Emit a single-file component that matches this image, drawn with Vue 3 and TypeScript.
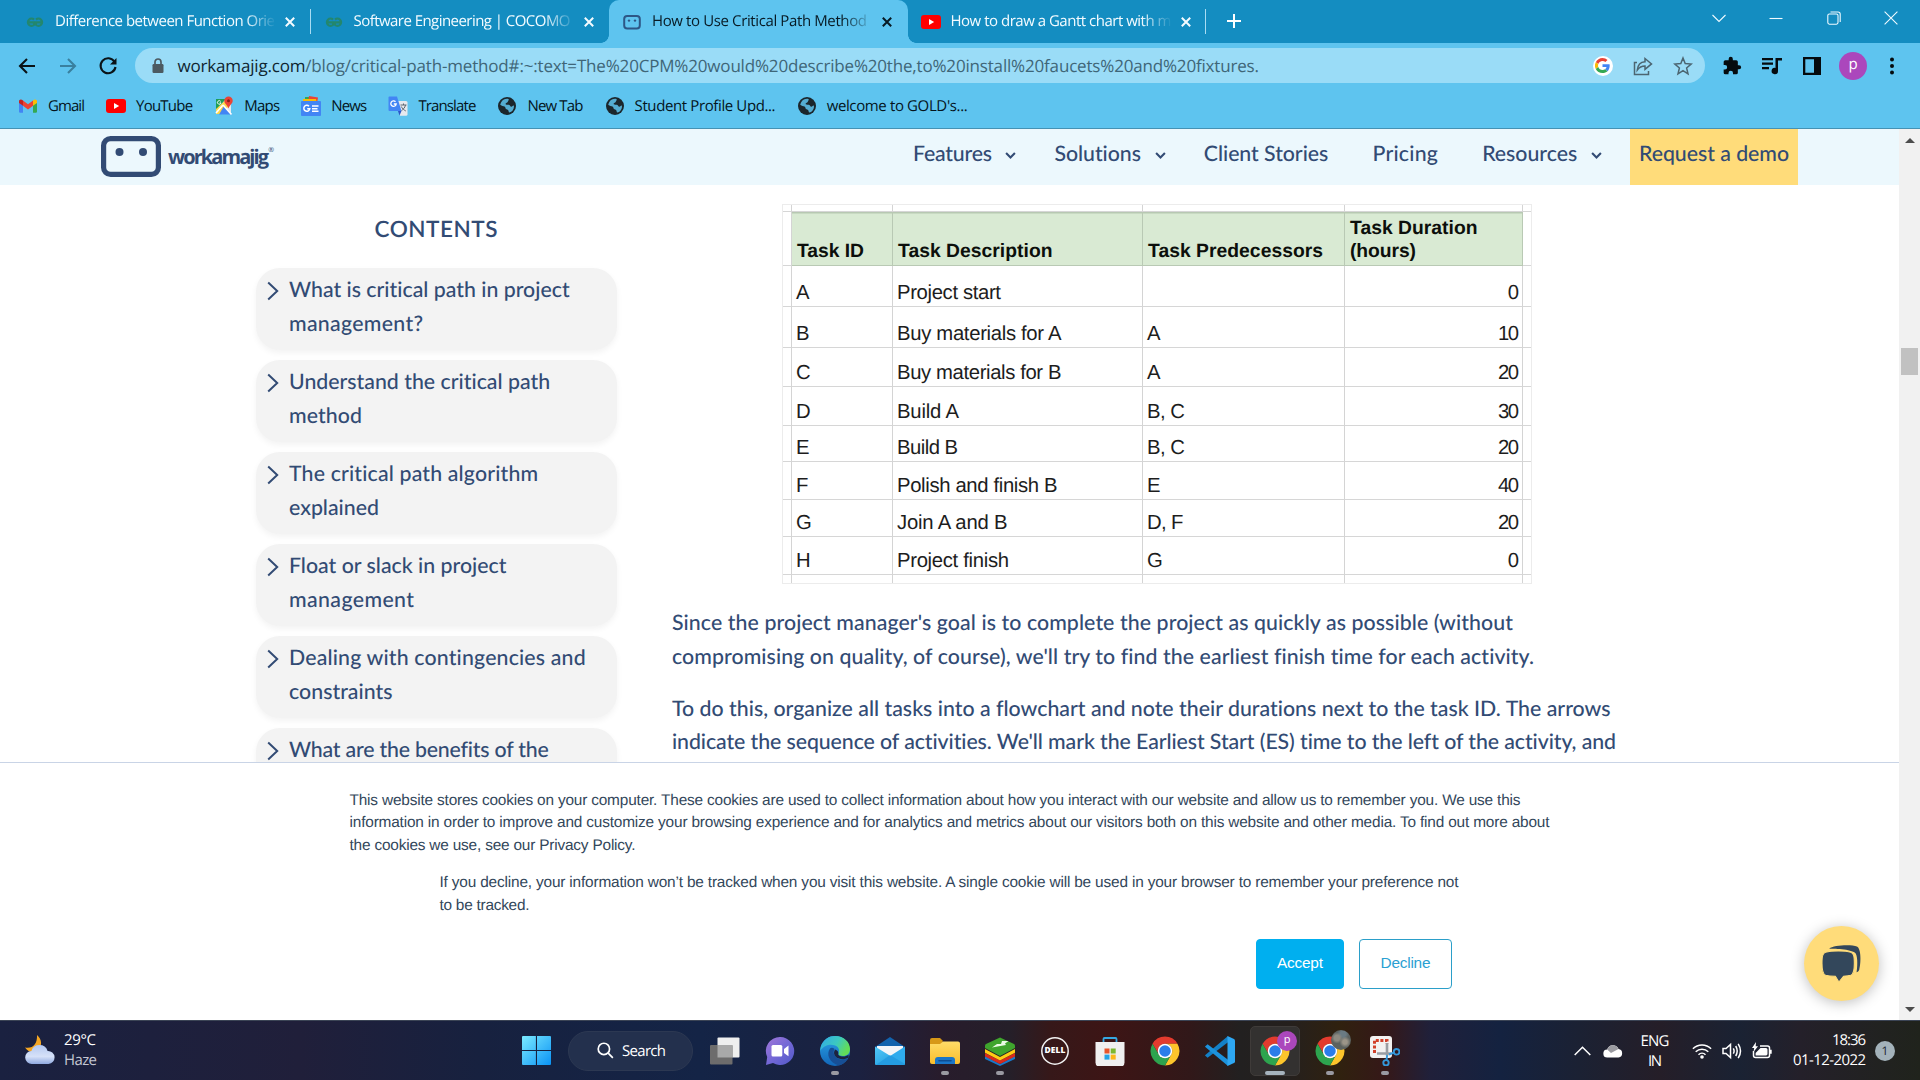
<script setup lang="ts">
import type { Directive } from 'vue'

// Spreads or tightens the letters so a line takes the given width in pixels.
const vFit: Directive<HTMLElement, number> = {
  mounted(el, binding) {
    el.style.letterSpacing = '0px'
    const natural = el.getBoundingClientRect().width
    const gaps = Math.max(1, (el.textContent ?? '').length - 1)
    const spacing = (binding.value - natural) / gaps
    el.style.letterSpacing = `${spacing}px`
    el.style.marginRight = `${-spacing}px`
  },
}

type Line = [text: string, width: number]

const tabs = [
  { title: 'Difference between Function Orie', width: 220, icon: 'gfg', active: false, sep: true },
  { title: 'Software Engineering | COCOMO', width: 217, icon: 'gfg', active: false, sep: false },
  { title: 'How to Use Critical Path Method', width: 215, icon: 'robot', active: true, sep: false },
  { title: 'How to draw a Gantt chart with m', width: 221, icon: 'youtube', active: false, sep: true },
]

const bookmarks = [
  { name: 'Gmail', width: 37, icon: 'gmail' },
  { name: 'YouTube', width: 57, icon: 'youtube' },
  { name: 'Maps', width: 36, icon: 'maps' },
  { name: 'News', width: 36, icon: 'news' },
  { name: 'Translate', width: 58, icon: 'translate' },
  { name: 'New Tab', width: 56, icon: 'globe' },
  { name: 'Student Profile Upd...', width: 141, icon: 'globe' },
  { name: "welcome to GOLD's...", width: 141, icon: 'globe' },
]

const nav = [
  { name: 'Features', width: 79, menu: true },
  { name: 'Solutions', width: 87, menu: true },
  { name: 'Client Stories', width: 124.5, menu: false },
  { name: 'Pricing', width: 65.5, menu: false },
  { name: 'Resources', width: 95, menu: true },
]

const contents: Line[][] = [
  [['What is critical path in project', 281], ['management?', 134]],
  [['Understand the critical path', 261.5], ['method', 73]],
  [['The critical path algorithm', 249.5], ['explained', 90]],
  [['Float or slack in project', 217.5], ['management', 125]],
  [['Dealing with contingencies and', 297], ['constraints', 103.5]],
  [['What are the benefits of the', 259.5]],
]

const headers: Line[][] = [
  [['Task ID', 67]],
  [['Task Description', 154.5]],
  [['Task Predecessors', 175]],
  [['Task Duration', 127.5], ['(hours)', 66]],
]

const tasks: { h: number; cells: Line[] }[] = [
  { h: 41, cells: [['A', 13], ['Project start', 104], ['', 0], ['0', 11]] },
  { h: 41, cells: [['B', 13], ['Buy materials for A', 164.5], ['A', 13], ['10', 21]] },
  { h: 39, cells: [['C', 14], ['Buy materials for B', 164.5], ['A', 13], ['20', 21]] },
  { h: 39, cells: [['D', 14], ['Build A', 62], ['B, C', 38], ['30', 21]] },
  { h: 36, cells: [['E', 13], ['Build B', 61], ['B, C', 38], ['20', 21]] },
  { h: 38, cells: [['F', 12], ['Polish and finish B', 160.5], ['E', 13], ['40', 21]] },
  { h: 37, cells: [['G', 15], ['Join A and B', 110.5], ['D, F', 36.5], ['20', 21]] },
  { h: 38, cells: [['H', 14], ['Project finish', 112], ['G', 15], ['0', 11]] },
]

const paragraphs: Line[][] = [
  [
    ["Since the project manager's goal is to complete the project as quickly as possible (without", 841],
    ["compromising on quality, of course), we'll try to find the earliest finish time for each activity.", 862],
  ],
  [
    ['To do this, organize all tasks into a flowchart and note their durations next to the task ID. The arrows', 939],
    ["indicate the sequence of activities. We'll mark the Earliest Start (ES) time to the left of the activity, and", 945],
  ],
]

const notice: Line[] = [
  ['This website stores cookies on your computer. These cookies are used to collect information about how you interact with our website and allow us to remember you. We use this', 1171],
  ['information in order to improve and customize your browsing experience and for analytics and metrics about our visitors both on this website and other media. To find out more about', 1200],
  ['the cookies we use, see our Privacy Policy.', 286],
]
const decline: Line[] = [
  ['If you decline, your information won’t be tracked when you visit this website. A single cookie will be used in your browser to remember your preference not', 1019],
  ['to be tracked.', 90],
]

const apps = [
  { icon: 'taskview', run: '' },
  { icon: 'chat', run: '' },
  { icon: 'edge', run: 'on' },
  { icon: 'mail', run: '' },
  { icon: 'folder', run: 'on' },
  { icon: 'stacks', run: 'on' },
  { icon: 'dell', run: '' },
  { icon: 'store', run: '' },
  { icon: 'chrome', run: '' },
  { icon: 'vscode', run: '' },
  { icon: 'chrome', run: 'front', badge: 'p' },
  { icon: 'chrome', run: 'on', badge: 'photo' },
  { icon: 'snip', run: 'on' },
]
</script>

<template>
  <div class="screen">
    <svg class="sprite" aria-hidden="true">
      <defs>
        <linearGradient id="gStart" x1="0" y1="0" x2="1" y2="1"><stop offset="0" stop-color="#7beaff" /><stop offset="1" stop-color="#0a93f5" /></linearGradient>
        <linearGradient id="gChat" x1="0" y1="0" x2="1" y2="1"><stop offset="0" stop-color="#a277d8" /><stop offset=".5" stop-color="#7468d6" /><stop offset="1" stop-color="#5059c9" /></linearGradient>
        <linearGradient id="gEdgeTop" x1="0" y1="0" x2="1" y2=".4"><stop offset="0" stop-color="#31a8e8" /><stop offset=".6" stop-color="#3cc9c0" /><stop offset="1" stop-color="#62dd58" /></linearGradient>
        <linearGradient id="gEdgeLow" x1="0" y1="0" x2="0" y2="1"><stop offset="0" stop-color="#2aa3e6" /><stop offset="1" stop-color="#1266b8" /></linearGradient>
        <linearGradient id="gFolder" x1="0" y1="0" x2="0" y2="1"><stop offset="0" stop-color="#ffdc68" /><stop offset="1" stop-color="#f9bd2c" /></linearGradient>
        <linearGradient id="gCloud" x1="0" y1="0" x2="0" y2="1"><stop offset="0" stop-color="#b4c8f0" /><stop offset=".6" stop-color="#d6e1f8" /><stop offset="1" stop-color="#8fa9e0" /></linearGradient>
        <linearGradient id="gMail" x1="0" y1="0" x2="1" y2="1"><stop offset="0" stop-color="#53c9f7" /><stop offset="1" stop-color="#1593dc" /></linearGradient>
      </defs>
      <symbol id="gfg" viewBox="0 0 20 20"><g fill="none" stroke="#23876e" stroke-width="2.2"><path d="M9 7.6A3.6 3.6 0 1 0 9 12.8V10.4H2.6" /><path d="M11 7.6a3.6 3.6 0 1 1 0 5.2v-2.4h6.4" /></g></symbol>
      <symbol id="robot" viewBox="0 0 20 20"><rect x="2.2" y="4" width="15.6" height="12.4" rx="3" fill="none" stroke="#2d5786" stroke-width="2" /><circle cx="7" cy="8.6" r="1.2" fill="#2d5786" /><circle cx="13" cy="8.6" r="1.2" fill="#2d5786" /></symbol>
      <symbol id="youtube" viewBox="0 0 20 20"><rect y="3" width="20" height="14" rx="3" fill="#f00" /><path d="M8 7v6l5.2-3z" fill="#fff" /></symbol>
      <symbol id="gmail" viewBox="0 0 20 20"><path d="M1 5.400V15.500q0 1.200 1.200 1.200H5V8z" fill="#4285f4" /><path d="M15 8v8.700h2.800q1.200 0 1.200-1.200V5.400z" fill="#34a853" /><path d="M5 4.500v5.300l5 3.700 5-3.700V4.500l-5 3.800z" fill="#ea4335" /><path d="M1 5.400C1 3.300 3.300 2.800 5 4.500v5.300L1 7z" fill="#c5221f" /><path d="M19 5.400c0-2.100-2.300-2.600-4-.9v5.300L19 7z" fill="#fbbc04" /></symbol>
      <symbol id="maps" viewBox="0 0 20 20"><path d="M2 3h10l5 6v8.500H2z" fill="#e8eaed" /><path d="M2 3h10L2 14z" fill="#1e9e58" /><path d="M2 13 13 3l3 6-9 9H2z" fill="#fdd74a" /><path d="m10 10 8 8.500H5z" fill="#4285f4" /><path d="m9 9 8.500 9.500M2 17l7-8" stroke="#fff" stroke-width="1.700" /><path d="M14.500.500a4.200 4.200 0 0 0-4.200 4.200c0 3 3.100 4 4.200 7.800 1.100-3.800 4.200-4.800 4.200-7.800A4.200 4.200 0 0 0 14.500.500z" fill="#ea4335" /><circle cx="14.500" cy="4.800" r="1.500" fill="#8c1c14" /><path d="M6.700 5.400a1.800 1.800 0 1 0 .3 1.500H5.600" fill="none" stroke="#fff" stroke-width=".9" /></symbol>
      <symbol id="news" viewBox="0 0 20 20"><path d="M4 1h9v6H4z" fill="#34a853" /><path d="m8 0 9 1.500-1 6H7z" fill="#ea4335" /><path d="M2 3h13l1 5H2z" fill="#fbbc04" /><rect y="5" width="20" height="15" rx="1" fill="#4285f4" /><path d="M8 10.200a3 3 0 1 0 .8 2.500H6.200" fill="none" stroke="#fff" stroke-width="1.500" /><path d="M11 10h6.500M11 12.700h5.500M11 15.300h6.500" stroke="#fff" stroke-width="1.400" /></symbol>
      <symbol id="translate" viewBox="0 0 20 20"><path d="M9 5h9q1.500 0 1.500 1.500v12q0 1.300-1.500 1.300h-6z" fill="#e6e9ee" /><path d="M1.500.500H9l4.500 14.500h-12Q.500 15 .500 14V1.500q0-1 1-1z" fill="#4285f4" /><path d="m10 15 3.500 0-2 4.500z" fill="#2a56c6" /><path d="M7.500 5.800a2.700 2.700 0 1 0 .7 2.200H5.800" fill="none" stroke="#fff" stroke-width="1.300" /><path d="M12.500 9h6M15.500 7.500V9M17.500 9c-.6 3-2.500 4.500-4 5.500m-.2-4c.9 2 2.700 3.500 4.500 4.500" fill="none" stroke="#5c6670" stroke-width="1" /></symbol>
      <symbol id="globe" viewBox="0 0 20 20"><circle cx="10" cy="10" r="9" fill="#1b262c" /><path d="M4.200 6.200C6 3.200 9 2.400 11.500 3c.8 1.200-.6 1.600-.7 2.800-.1 1-1.800.8-2.200 1.900-.3 1 1.700.9 3 1 1.500.2 1.500 1.800 2.800 2 .9.100.8-1.400 2.500-1.300.5 3.500-1.600 6.300-4.500 7.200-1-.3-.4-1.800-1.400-2.700-.8-.8-2.500-.6-2.600-2 0-.9-.7-1.500-1.800-1.700C5.100 10 3.400 9.400 3.200 8.500z" fill="#5ec4ef" opacity=".85" /></symbol>
      <symbol id="chrome" viewBox="0 0 48 48"><path d="M4.080 12.500A23 23 0 0 1 43.920 12.500H24A11.500 11.500 0 0 0 14.040 29.750z" fill="#e33b2e" /><path d="M43.920 12.500A23 23 0 0 1 24 47L33.960 29.750A11.500 11.500 0 0 0 24 12.500z" fill="#fdc52b" /><path d="M24 47A23 23 0 0 1 4.080 12.500L14.040 29.750A11.500 11.500 0 0 0 33.960 29.750z" fill="#2da44e" /><circle cx="24" cy="24" r="11.600" fill="#fff" /><circle cx="24" cy="24" r="9.200" fill="#2b7de9" /></symbol>
      <symbol id="taskview" viewBox="0 0 30 30"><rect x="7.500" y="1.500" width="22" height="20" rx="1" fill="#efefef" /><rect x="0" y="9" width="22.500" height="19.500" rx="1" fill="#6d6c6c" /><path d="M7.500 9h15v12.500h-15z" fill="#a9a9a9" /></symbol>
      <symbol id="chat" viewBox="0 0 30 30"><path d="M15 1a14 14 0 1 1-7 26l-7 2L2.200 21A14 14 0 0 1 15 1z" fill="url(#gChat)" /><rect x="6.500" y="9" width="10.800" height="11.500" rx="1.500" fill="#fff" /><path d="m19 13 4.500-3.500v10.800L19 17z" fill="#fff" /></symbol>
      <symbol id="edge" viewBox="0 0 30 30"><circle cx="15" cy="15" r="15" fill="url(#gEdgeLow)" /><path d="M1 10C4 3 9 0 15 0c9 0 15 6 15 13 0 5-3.500 7-7 7-3 0-5-1-4.500-2.500.8-2 1-5-1.500-7C13 7.500 5 7.500 0 15z" fill="url(#gEdgeTop)" /><path d="M10 12.500C6 18 9 27 19 29.400c4-1.200 7-3.600 9-7-4 1.600-9 1.600-12-1.200-2.500-2.200-3-5.500-1.500-8.200-1.500-1.500-3.500-1.500-4.500-.5z" fill="#174f96" /><path d="M15 13.500c2.500.5 3.800 3 3.300 4.300-.6 1.600 1.700 2.700 4.700 2.700 2.300 0 4-.6 5.500-2l.3 3c-4.300 2.600-9.800 2.200-12.800-.4-2.400-2.200-2.500-5.200-1-7.600z" fill="#1c2340" /></symbol>
      <symbol id="mail" viewBox="0 0 30 30"><path d="M0 11 15 1l15 10v5H0z" fill="#1263ad" /><path d="M2 10h26v12H2z" fill="#f3f5f8" /><path d="M0 10.500 30 29H1q-1 0-1-1z" fill="url(#gMail)" /><path d="M30 10.500v17.500q0 1-1 1H1z" fill="#2fabed" /><path d="m15 19 15 9v.500l-1 .5H1z" fill="#1b8fd8" opacity=".55" /></symbol>
      <symbol id="folder" viewBox="0 0 30 30"><path d="M0 4q0-2 2-2h8l3 3-3 5H0z" fill="#d79817" /><path d="M0 8h10l3-2.500h15q2 0 2 2V26q0 2-2 2H2q-2 0-2-2z" fill="url(#gFolder)" /><path d="M5 28v-4q0-3 3-3h14q3 0 3 3v4z" fill="#1a76c8" /><path d="M9 24.800h12" stroke="#0d4e93" stroke-width="1.600" stroke-linecap="round" /></symbol>
      <symbol id="stacks" viewBox="0 0 30 30"><path d="m0 20 15 8 15-8v3l-15 7-15-7z" fill="#1878c9" /><path d="m0 17 15 7.500L30 17v3.500L15 28 0 20.500z" fill="#d92a1c" /><path d="m0 13 15 8 15-8v3.700L15 24.500 0 16.700z" fill="#ffcc14" /><path d="M15 1.500 29 8q1 .600 1 2v2L15 20 0 12v-2q0-1.400 1-2z" fill="#3fa52d" /><path d="m17 5 6.500 0-3.500 2.500 1 1.500-14 2.500 5-3.500h4z" fill="#e9fbe3" /></symbol>
      <symbol id="dell" viewBox="0 0 30 30"><circle cx="15" cy="15" r="13.200" fill="none" stroke="#f1f1f1" stroke-width="1.500" /></symbol>
      <symbol id="store" viewBox="0 0 30 30"><path d="M8.500 7V3q0-1 1-1h11q1 0 1 1v4" fill="none" stroke="#35a8e2" stroke-width="1.800" /><path d="M.500 6h29v20.500q0 4-4 4h-21q-4 0-4-4z" fill="#f0f0f0" /><path d="M9.500 12.500h5v5h-5z" fill="#e9552b" /><path d="M15.700 12.500h5v5h-5z" fill="#7cb82f" /><path d="M9.500 18.600h5v5h-5z" fill="#25a3e6" /><path d="M15.700 18.600h5v5h-5z" fill="#fbb81b" /></symbol>
      <symbol id="vscode" viewBox="0 0 30 30"><path d="m0 19.500 2.600 2.200L23 6.200V0L.3 19z" fill="#1380c7" /><path d="M0 10.500 2.600 8.300 23 23.800V30L.3 11z" fill="#1c92dc" /><path d="m22.500 0 6.500 3q1 .500 1 1.500v21q0 1-1 1.500l-6.500 3z" fill="#2ea7f2" /></symbol>
      <symbol id="snip" viewBox="0 0 30 30"><rect y="0" width="22" height="22" rx="3" fill="#f3f1f0" /><path d="M4.500 17V4.500H17v3" fill="none" stroke="#d2402a" stroke-width="3" stroke-dasharray="3 1.600" /><path d="M17 7v12.500M7 17.500h14" stroke="#9a9da2" stroke-width="2.600" /><g fill="none" stroke="#3498db" stroke-width="1.900"><circle cx="26.600" cy="15.800" r="2.800" /><circle cx="16" cy="26.800" r="2.700" /><path d="m19 18.500 5-2m-6.800 2.500-.7 5" /></g></symbol>
    </svg>

    <header class="browser">
      <div class="tabs">
        <div v-for="t in tabs" :key="t.title" class="tab" :class="{ active: t.active, sep: t.sep }">
          <svg class="i20"><use :href="'#' + t.icon" /></svg>
          <span class="title"><span v-fit="t.width" class="ln">{{ t.title }}</span></span>
          <svg class="close" viewBox="0 0 12 12"><path d="m1.800 1.800 8.400 8.400m0-8.400-8.400 8.400" /></svg>
        </div>
        <svg class="plus" viewBox="0 0 16 16"><path d="M8 1v14M1 8h14" /></svg>
        <div class="winctl">
          <svg viewBox="0 0 14 14"><path d="m.5 4 6.500 6.500L13.500 4" /></svg>
          <svg viewBox="0 0 14 14"><path d="M.5 7.500h13" /></svg>
          <svg viewBox="0 0 14 14"><rect x=".8" y="3" width="10.200" height="10.200" rx="1.600" /><path d="M3.500 1H11q2.200 0 2.200 2.200V11" /></svg>
          <svg viewBox="0 0 14 14"><path d="m.6.6 12.800 12.800m0-12.800L.6 13.400" /></svg>
        </div>
      </div>

      <div class="toolbar">
        <svg class="nv" viewBox="0 0 20 20"><path d="M18 10H3m7-7-7 7 7 7" /></svg>
        <svg class="nv dim" viewBox="0 0 20 20"><path d="M2 10h15m-7-7 7 7-7 7" /></svg>
        <svg class="nv" viewBox="0 0 20 20"><path d="M16.500 5.800A7.500 7.500 0 1 0 17.500 11" /><path d="M18.500 2v6.500H12z" fill="#0a1317" stroke="none" /></svg>
        <div class="omni">
          <svg class="lock" viewBox="0 0 12 16"><rect x=".5" y="6" width="11" height="9" rx="1.200" fill="#4c5a61" /><path d="M3 6V4a3 3 0 0 1 6 0v2" fill="none" stroke="#4c5a61" stroke-width="1.700" /></svg>
          <span v-fit="1081.5" class="ln url"><b>workamajig.com</b>/blog/critical-path-method#:~:text=The%20CPM%20would%20describe%20the,to%20install%20faucets%20and%20fixtures.</span>
          <span class="g"><svg viewBox="0 0 48 48"><path fill="#ea4335" d="M24 9.500c3.500 0 6.700 1.200 9.200 3.600l6.900-6.900C35.900 2.400 30.500 0 24 0 14.600 0 6.500 5.400 2.600 13.200l8 6.200C12.400 13.700 17.700 9.500 24 9.500z" /><path fill="#4285f4" d="M47 24.600c0-1.600-.2-3.100-.4-4.600H24v9h12.900c-.6 3-2.200 5.500-4.700 7.200l7.700 6C44.400 38 47 31.800 47 24.600z" /><path fill="#fbbc05" d="M10.500 28.600a14.500 14.500 0 0 1 0-9.200l-8-6.200a24 24 0 0 0 0 21.600z" /><path fill="#34a853" d="M24 48c6.500 0 11.900-2.100 15.900-5.800l-7.700-6c-2.200 1.500-4.900 2.300-8.200 2.300-6.300 0-11.600-4.200-13.500-9.900l-8 6.200C6.500 42.600 14.600 48 24 48z" /></svg></span>
          <svg class="oi" viewBox="0 0 20 20"><path d="M4 6.500H1.500v12h14V15" /><path d="M12 2.500v3.200C7 6 4.700 9.500 4.300 14c2-2.800 4.200-4 7.700-4v3.300l6.500-5.400z" /></svg>
          <svg class="oi" viewBox="0 0 20 20"><path d="m10 2 2.200 5.600 6 .5-4.600 3.900 1.400 5.900-5-3.200-5 3.200 1.400-5.900L1.800 8.100l6-.5z" /></svg>
        </div>
        <div class="ext">
          <svg class="i20" viewBox="0 0 24 24"><path d="M20.500 11H19V7a2 2 0 0 0-2-2h-4V3.500a2.500 2.500 0 0 0-5 0V5H4a2 2 0 0 0-2 2v3.800h1.500a2.700 2.700 0 0 1 0 5.400H2V20a2 2 0 0 0 2 2h3.800v-1.500a2.700 2.700 0 0 1 5.400 0V22H17a2 2 0 0 0 2-2v-4h1.500a2.500 2.500 0 0 0 0-5z" /></svg>
          <svg class="i20" viewBox="0 0 20 20"><path d="M0 2h11v2.200H0zM0 6.500h11v2.200H0zM0 11h7v2.200H0zM13.500 2H20v2.400h-4V15a3.200 3.200 0 1 1-2.500-3.100z" /></svg>
          <svg class="i20" viewBox="0 0 20 20"><path fill-rule="evenodd" d="M1 1h18v18H1zM3.300 3.300v13.400H12V3.300z" /></svg>
          <span class="me">p</span>
          <svg class="i20" viewBox="0 0 20 20"><circle cx="10" cy="3.500" r="2" /><circle cx="10" cy="10" r="2" /><circle cx="10" cy="16.500" r="2" /></svg>
        </div>
      </div>

      <div class="bookmarks">
        <div v-for="b in bookmarks" :key="b.name" class="bm">
          <svg class="i20"><use :href="'#' + b.icon" /></svg>
          <span class="bt" :style="{ width: b.width + 'px' }"><span v-fit="b.width" class="ln">{{ b.name }}</span></span>
        </div>
      </div>
    </header>

    <div class="viewport">
      <main class="page">
        <nav class="sitenav">
          <svg class="logo" viewBox="0 0 60 42"><rect x="2.600" y="2.600" width="54.800" height="35.800" rx="7" /><circle cx="18.500" cy="16" r="4" /><circle cx="42" cy="16" r="4" /></svg>
          <span class="brand"><span v-fit="101" class="ln">workamajig</span><sup>®</sup></span>
          <div class="links">
            <span v-for="n in nav" :key="n.name" class="link">
              <span class="bt" :style="{ width: n.width + 'px' }"><span v-fit="n.width" class="ln">{{ n.name }}</span></span>
              <svg v-if="n.menu" class="chev" viewBox="0 0 10 8"><path d="m1 1.800 4 4 4-4" /></svg>
            </span>
          </div>
          <span class="demo"><span v-fit="150" class="ln">Request a demo</span></span>
        </nav>

        <div class="body">
          <aside>
            <h2><span v-fit="123" class="ln">CONTENTS</span></h2>
            <div v-for="(c, i) in contents" :key="i" class="card">
              <svg viewBox="0 0 12 20"><path d="m1.200 1.500 9 8.500-9 8.500" /></svg>
              <div><div v-for="l in c" :key="l[0]" class="row"><span v-fit="l[1]" class="ln">{{ l[0] }}</span></div></div>
            </div>
          </aside>

          <article>
            <div class="sheet">
              <div class="tr" style="height: 8px"><i v-for="k in 6" :key="k" /></div>
              <div class="tr head">
                <i />
                <div v-for="(h, i) in headers" :key="i" class="td">
                  <span v-for="l in h" :key="l[0]" v-fit="l[1]" class="ln">{{ l[0] }}</span>
                </div>
                <i />
              </div>
              <div v-for="(r, i) in tasks" :key="i" class="tr" :style="{ height: r.h + 'px' }">
                <i />
                <div v-for="(c, j) in r.cells" :key="j" class="td"><span v-fit="c[1]" class="ln">{{ c[0] }}</span></div>
                <i />
              </div>
              <div class="tr last"><i v-for="k in 6" :key="k" /></div>
            </div>
            <p v-for="(p, i) in paragraphs" :key="i">
              <span v-for="l in p" :key="l[0]" class="row"><span v-fit="l[1]" class="ln">{{ l[0] }}</span></span>
            </p>
          </article>
        </div>

        <section class="cookies">
          <div class="n1"><div v-for="l in notice" :key="l[0]"><span v-fit="l[1]" class="ln">{{ l[0] }}</span></div></div>
          <div class="n2"><div v-for="l in decline" :key="l[0]"><span v-fit="l[1]" class="ln">{{ l[0] }}</span></div></div>
          <div class="btns">
            <button class="yes"><span v-fit="46" class="ln">Accept</span></button>
            <button class="no"><span v-fit="50" class="ln">Decline</span></button>
          </div>
        </section>

        <div class="bubble">
          <svg viewBox="0 0 40 38"><path d="M8 4.500C12 1 30 .300 35 2.500c4.500 2 4 17 2.300 22.500-.5 1.700-1.600 2.200-2.600 2.500.8-5 1.300-14-.7-18C32 5 14 4.500 8 4.500z" /><path d="M4.500 8C10 6.500 24 6.500 29 8c3 1 3.500 4 3.500 11s-.6 10.500-3.500 11.500c-1.700.5-4 .8-7 1L17.500 37 14 31.500c-4-.1-7-.4-9.500-1C1.800 29.500 1 26 1 19S1.500 9 4.500 8z" stroke="#ffdc7a" stroke-width="1" /></svg>
        </div>
      </main>
      <div class="scroll"><span class="up" /><span class="thumb" /><span class="down" /></div>
    </div>

    <footer class="taskbar">
      <div class="weather">
        <svg viewBox="0 0 30 30"><path d="M12 0c5 4 5.500 11 1 15-4 3.500-9.500 2.500-13-2.500C8 14 12.500 9 12 0z" fill="#f5a623" /><path d="M7 29a6.500 6.500 0 0 1-.6-13A8.500 8.500 0 0 1 22.600 16 6.500 6.500 0 0 1 23.500 29z" fill="url(#gCloud)" /></svg>
        <div><div><span v-fit="32" class="ln">29°C</span></div><div class="dimtxt"><span v-fit="33" class="ln">Haze</span></div></div>
      </div>
      <svg class="start" viewBox="0 0 29 29"><path d="M1 0h12.900v13.900H0V1q0-1 1-1zM15 0h13q1 0 1 1v12.900H15zM0 15h13.900v14H1q-1 0-1-1zM15 15h14v13q0 1-1 1H15z" fill="url(#gStart)" /></svg>
      <div class="search"><svg viewBox="0 0 18 18"><circle cx="7.300" cy="7.300" r="6" /><path d="m11.800 11.800 5 5" /></svg><span v-fit="44" class="ln">Search</span></div>
      <div class="apps">
        <div v-for="(a, i) in apps" :key="i" class="app" :class="a.run">
          <svg><use :href="'#' + a.icon" /></svg>
          <span v-if="a.icon === 'dell'" class="dell"><span v-fit="21" class="ln">DELL</span></span>
          <span v-if="a.badge === 'p'" class="bdg">p</span>
          <span v-if="a.badge === 'photo'" class="bdg photo" />
        </div>
      </div>
      <div class="tray">
        <svg class="up2" viewBox="0 0 17 10"><path d="m.7 9 7.800-7.800L16.300 9" /></svg>
        <svg class="cloud" viewBox="0 0 20 14"><path d="M4.500 13.500a4 4 0 0 1-.3-8A6 6 0 0 1 15.500 5a4.300 4.300 0 0 1 0 8.500z" fill="#fff" /><path d="M4.200 5.500A6 6 0 0 1 15.500 5L8 9z" fill="#9b9ba1" /></svg>
        <div class="lang"><div><span v-fit="29" class="ln">ENG</span></div><div><span v-fit="14" class="ln">IN</span></div></div>
        <svg class="wifi" viewBox="0 0 20 16"><path d="M.9 5.800a13 13 0 0 1 18.200 0M3.700 8.800a9 9 0 0 1 12.600 0M6.500 11.700a5 5 0 0 1 7 0" /><circle cx="10" cy="14" r="1.800" /></svg>
        <svg class="snd" viewBox="0 0 20 18"><path d="M1 6.500v5h3l4.500 4V2.500L4 6.500zM11.300 6.300q1.600 2.700 0 5.400M13.700 4q3 5 0 10M16.200 1.800q4.600 7.200 0 14.400" /></svg>
        <svg class="bat" viewBox="0 0 20 18"><path d="M8 4h7.500q2 0 2 2v7.500q0 2-2 2H3.500q-2 0-2-2V9" /><path d="M8.500 6h5.500q1.500 0 1.500 1.500v4.600q0 1.400-1.500 1.400H3.600V11zM18 7.800h1.700v4H18zM4 0 0 6h2.200L1.500 10 6 4.200H3.700z" fill="#fff" stroke="none" /></svg>
        <div class="clock"><div><span v-fit="34" class="ln">18:36</span></div><div><span v-fit="73" class="ln">01-12-2022</span></div></div>
        <span class="count">1</span>
      </div>
    </footer>
  </div>
</template>

<style>
html, body { margin: 0; overflow: hidden; }
</style>

<style scoped>
* { box-sizing: border-box; }
.screen { width: 1920px; height: 1080px; display: flex; flex-direction: column; overflow: hidden; background: #fff; font-family: "Open Sans", "Noto Sans", sans-serif; font-size: 15px; text-rendering: geometricPrecision; }
svg { display: block; flex: none; }
.sprite { position: absolute; width: 0; height: 0; }
.ln { display: inline-block; white-space: pre; }
.bt { display: block; white-space: nowrap; }
.i20 { width: 20px; height: 20px; }

.browser { height: 129px; flex: none; background: #5ec4ef; border-bottom: 1px solid #4592b4; }
.tabs { height: 43px; padding-left: 12px; background: #148dc1; display: flex; align-items: center; }
.tab { position: relative; width: 298.500px; height: 43px; padding-left: 13px; display: flex; align-items: center; color: #f4fbff; line-height: 40px; }
.tab .title { width: 221px; height: 42px; margin: 0 8px 0 10px; overflow: hidden; white-space: nowrap; -webkit-mask-image: linear-gradient(90deg, #000 86%, transparent 100%); mask-image: linear-gradient(90deg, #000 86%, transparent 100%); }
.tab.sep::after { content: ""; position: absolute; right: 0; top: 9px; width: 1px; height: 25px; background: #a9dcf3; }
.tab.active { background: #5ec4ef; border-radius: 10px 10px 0 0; color: #081a24; }
.tab.active::before, .tab.active::after { content: ""; position: absolute; bottom: 0; width: 8px; height: 8px; }
.tab.active::before { left: -8px; background: radial-gradient(circle at 0 0, transparent 7.500px, #5ec4ef 8px); }
.tab.active::after { right: -8px; background: radial-gradient(circle at 100% 0, transparent 7.500px, #5ec4ef 8px); }
.close { width: 12px; height: 12px; fill: none; stroke: currentColor; stroke-width: 2; }
.plus { width: 16px; height: 16px; margin: 0 0 1px 20px; fill: none; stroke: #fff; stroke-width: 2; }
.winctl { margin-left: auto; margin-right: 22px; display: flex; gap: 43.300px; padding-bottom: 7px; }
.winctl svg { width: 14px; height: 14px; fill: none; stroke: #f0faff; stroke-width: 1.100; }

.toolbar { height: 45px; padding-left: 17px; display: flex; align-items: center; }
.nv { width: 20px; height: 20px; margin-right: 21px; fill: none; stroke: #0a1317; stroke-width: 2.100; }
.nv.dim { stroke: #39809f; margin-right: 20px; }
.nv:nth-child(3) { margin-right: 17px; }
.omni { width: 1570px; height: 35px; border-radius: 18px; background: #9adcf7; display: flex; align-items: center; padding-left: 16.500px; }
.lock { width: 12px; height: 16px; margin-right: 14px; }
.url { font-size: 17px; color: #3f6678; line-height: 34px; }
.url b { font-weight: 400; color: #0f2530; }
.g { width: 20px; height: 20px; border-radius: 50%; background: #fff; margin-left: auto; display: flex; align-items: center; justify-content: center; }
.g svg { width: 15px; height: 15px; }
.oi { width: 20px; height: 20px; margin-left: 20px; fill: none; stroke: #4c6571; stroke-width: 1.500; }
.oi:last-child { margin-right: 12.500px; }
.ext { display: flex; align-items: center; gap: 20px; margin-left: 17px; fill: #050b0e; }
.me { width: 28px; height: 28px; border-radius: 50%; background: #ab47bc; color: #fff; text-align: center; line-height: 25px; font-size: 15px; margin: 0 -5px 0 -3px; }

.bookmarks { height: 36px; padding-left: 18px; display: flex; align-items: center; gap: 21.100px; color: #04141c; }
.bm { display: flex; align-items: center; gap: 10px; line-height: 20px; }

.viewport { height: 891px; display: flex; flex: none; }
.page { position: relative; width: 1899px; height: 891px; overflow: hidden; background: #fff; color: #324b74; font-family: Lato, "Open Sans", sans-serif; font-size: 21.300px; font-weight: 500; }
.sitenav { height: 56px; background: #ecf8fd; display: flex; align-items: center; padding-left: 101px; }
.logo { width: 60px; height: 42px; fill: #324b74; }
.logo rect { fill: none; stroke: #324b74; stroke-width: 5.200; }
.brand { width: 106px; margin-left: 7px; font: 700 20px/30px "Open Sans", sans-serif; white-space: nowrap; position: relative; }
.brand sup { position: absolute; top: 3px; right: 0; font-size: 7px; line-height: 12px; font-weight: 400; }
.links { display: flex; margin-left: 639px; width: 717px; line-height: 49px; height: 56px; }
.link { display: flex; align-items: flex-start; margin-right: 44.200px; }
.link:nth-child(1), .link:nth-child(2) { margin-right: 38px; }
.link:last-child { margin-right: 0; }
.chev { width: 11px; height: 9px; margin: 22px 0 0 13.400px; fill: none; stroke: #324b74; stroke-width: 1.900; }
.demo { width: 168px; height: 56px; background: #ffdc7a; text-align: center; line-height: 49px; }

.body { display: flex; align-items: flex-start; padding-left: 256px; }
aside { width: 361px; }
h2 { margin: 0; height: 83px; padding-top: 29px; text-align: center; font-size: 22.500px; line-height: 30px; font-weight: 600; }
h2 .ln { margin-left: -1px; }
.card { height: 81.500px; margin-bottom: 10.600px; border-radius: 24px; background: #f3f3f3; box-shadow: 0 3px 6px rgba(0, 0, 0, .05); display: flex; padding: 5px 0 0 11px; }
.card svg { width: 12px; height: 20px; margin: 7.500px 10px 0 0; fill: none; stroke: #324b74; stroke-width: 2; }
.row { display: block; height: 33.500px; line-height: 33.500px; white-space: nowrap; }
article { margin-left: 55px; padding-top: 19px; }
.sheet { width: 750px; height: 380px; margin: 0 0 22px 110px; border: 1px solid #ececec; font: 400 20.300px/22px "Liberation Sans", Arial, sans-serif; color: #1d1d1d; overflow: hidden; }
.tr { display: grid; grid-template-columns: 9px 101px 250px 202px 178px 10px; margin-right: -2px; }
.tr:first-child { margin-top: -1px; }
.tr > * { border-right: 1px solid #d4d4d4; border-bottom: 1.500px solid #d6d6d6; }
.tr.last { height: 9px; }
.td { display: flex; flex-direction: column; align-items: flex-start; justify-content: flex-end; padding: 0 4px 2.500px 4px; }
.td:nth-child(5) { align-items: flex-end; padding-right: 3px; }
.head { height: 54px; font-size: 19.300px; line-height: 23.500px; font-weight: 700; color: #0c0f0b; }
.head .td { background: #d9ead3; border-color: #b9c9b4; padding-left: 5px; padding-bottom: 1.500px; box-shadow: inset 0 1.500px #b7c8b2; }
.head .td:nth-child(5) { align-items: flex-start; }
p { margin: 0 0 18.500px; }

.cookies { position: absolute; left: 0; right: 0; top: 633px; height: 258px; background: #fff; border-top: 1px solid #c9d4e6; padding-top: 26.500px; font: 400 15.400px/22.700px "Liberation Sans", Arial, sans-serif; color: #33475b; }
.n1 { padding-left: 349.500px; }
.n2 { padding-left: 439.500px; margin-top: 14.500px; }
.btns { display: flex; gap: 15px; padding-left: 1256px; margin-top: 21.500px; }
button { height: 50px; border-radius: 4px; font: inherit; padding: 0 0 1px; border: 1px solid #00afef; }
.yes { width: 88px; background: #00afef; color: #fff; }
.no { width: 93px; background: #fff; color: #2b9fd2; border-color: #2b9fc9; }
.bubble { position: absolute; left: 1804px; top: 797px; width: 75px; height: 75px; border-radius: 50%; background: #ffdc7a; box-shadow: 0 2px 14px rgba(0, 0, 0, .25); display: flex; align-items: center; justify-content: center; }
.bubble svg { width: 41px; height: 39px; fill: #33475b; }

.scroll { width: 21px; background: #f1f1f1; display: flex; flex-direction: column; align-items: center; }
.up, .down { border: 5px solid transparent; }
.up { border-top: 0; border-bottom-color: #4c4c4c; margin-top: 9px; }
.down { border-bottom: 0; border-top-color: #4c4c4c; margin: auto 0 8px; }
.thumb { width: 17px; height: 27px; background: #c1c1c1; margin-top: 205px; }

.taskbar { height: 60px; display: flex; align-items: center; color: #fff; line-height: 20px; border-top: 1px solid #3b4455; background: linear-gradient(90deg, #1a2140 0, #201f3a 300px, #17213f 480px, #142446 700px, #1b2140 860px, #281c2c 940px, #251f29 1010px, #361819 1050px, #3d1515 1110px, #311819 1190px, #222020 1240px, #25201d 1290px, #30210f 1340px, #351818 1385px, #20203a 1430px, #142240 1500px, #1b2133 1580px, #251e28 1660px, #1a2233 1740px, #24202a 1800px, #20231c 1920px); }
.weather { width: 497px; padding-left: 25px; display: flex; align-items: center; gap: 9px; margin-top: -2px; }
.weather svg { width: 30px; height: 30px; }
.dimtxt { color: #c3c6d2; }
.start { width: 29px; height: 29px; margin-left: 25px; }
.search { width: 125px; height: 40px; margin-left: 17px; border-radius: 20px; background: #23304d; border: 1px solid #2c3852; display: flex; align-items: center; padding-left: 28px; gap: 8px; }
.search svg { width: 17px; height: 17px; fill: none; stroke: #fff; stroke-width: 1.800; }
.apps { display: flex; margin-left: 7px; gap: 5px; }
.app { position: relative; width: 50px; height: 50px; display: flex; align-items: center; justify-content: center; border-radius: 5px; }
.app svg { width: 30px; height: 30px; }
.app.on::after, .app.front::after { content: ""; position: absolute; bottom: 1px; left: 21px; width: 8px; height: 4px; border-radius: 2px; background: #9a9aa2; }
.app.front { background: #333130; border: 1px solid #3f3b39; }
.app.front::after { left: 14px; width: 20px; bottom: 0; background: #a6b3bd; }
.dell { position: absolute; left: 14.500px; top: 17px; font-size: 8.500px; line-height: 16px; font-weight: 800; white-space: nowrap; }
.bdg { position: absolute; left: 26px; top: 4px; width: 20px; height: 20px; border-radius: 50%; background: #ab47bc; text-align: center; font-size: 11px; line-height: 17px; }
.bdg.photo { background: radial-gradient(circle at 30% 40%, #8d8a80 0 15%, transparent 30%), radial-gradient(circle at 70% 60%, #9b9588 0 12%, transparent 30%), radial-gradient(circle at 60% 20%, #6a7b83 0 14%, transparent 30%), #5c625f; }
.tray { margin-left: auto; display: flex; align-items: center; padding-right: 25px; }
.tray svg { fill: none; stroke: #fff; stroke-width: 1.500; }
.up2 { width: 17px; height: 10px; }
.tray .cloud { width: 20px; height: 14px; margin-left: 12px; stroke: none; }
.lang { width: 30px; text-align: center; margin: 0 22px 0 17px; }
.wifi { width: 20px; height: 16px; }
.wifi circle { fill: #fff; stroke: none; }
.snd { width: 20px; height: 18px; margin-left: 10px; }
.bat { width: 20px; height: 18px; margin-left: 10px; }
.clock { width: 94px; text-align: right; margin-top: -2px; }
.count { width: 20px; height: 20px; border-radius: 50%; background: #a3b2ba; color: #1e2830; text-align: center; font-size: 12px; line-height: 19px; margin-left: 9px; }
</style>
